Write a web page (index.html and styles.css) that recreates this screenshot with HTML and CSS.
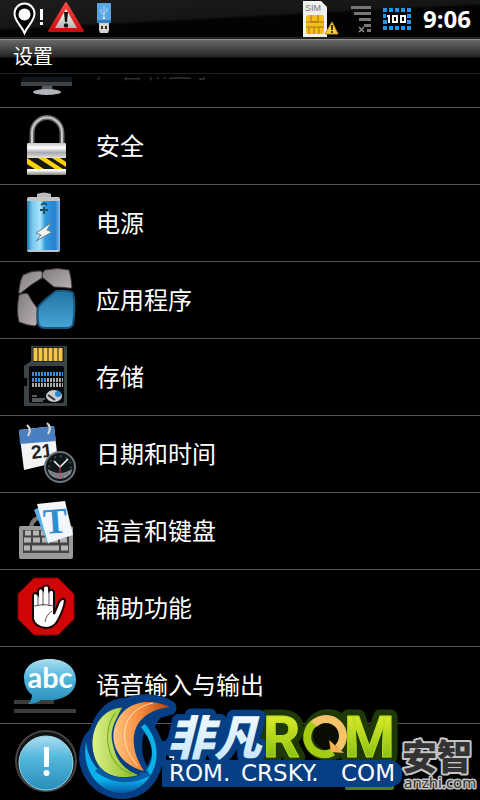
FILE: index.html
```html
<!DOCTYPE html>
<html lang="zh-CN">
<head>
<meta charset="utf-8">
<meta name="viewport" content="width=device-width, initial-scale=1">
<title>设置</title>
<link rel="stylesheet" href="styles.css">
</head>
<body>
<header class="status">
  <svg class="status-left" width="112" height="38" viewBox="0 0 112 38" aria-hidden="true">
    <defs>
      <linearGradient id="red" x2="0" y2="1"><stop stop-color="#ff4a40"/><stop offset="1" stop-color="#c80d0d"/></linearGradient>
      <linearGradient id="silver" x2="0" y2="1"><stop stop-color="#fff"/><stop offset="1" stop-color="#b5b5b5"/></linearGradient>
    </defs>
    <path d="M24.500 33C21 25 14.500 21 14.500 13.500A10 10 0 0 1 34.500 13.500C34.500 21 28 25 24.500 33Z" fill="#000" stroke="#fff" stroke-width="2"/>
    <circle cx="24.500" cy="14.500" r="6" fill="#fff"/>
    <path d="M40 9h3v11h-3zM40 22h3v3h-3z" fill="#fff"/>
    <path d="M66 3L83 31H49Z" fill="url(#red)" stroke="url(#red)" stroke-width="2" stroke-linejoin="round"/>
    <path d="M66 9L77 28H55Z" fill="url(#silver)"/>
    <path d="M64 12h4l-1 10h-2z" fill="#111"/><circle cx="66" cy="25.500" r="2.200" fill="#111"/>
    <rect x="97" y="3" width="14" height="20" rx="1" fill="#5aa5e0"/><rect x="97" y="20" width="14" height="3" fill="#2f7fc4"/>
    <path d="M104 6v12M101 9v3l3 3M107 8v3l-3 3" fill="none" stroke="#b9dcf7"/><circle cx="104" cy="18" r="1.500" fill="#b9dcf7"/>
    <path d="M99 23h10v7l-1 3h-8l-1-3z" fill="#d8d4cc"/><path d="M101 26h2v3h-2zM105 26h2v3h-2z" fill="#333"/>
  </svg>
  <svg class="status-right" width="112" height="38" viewBox="0 0 112 38" aria-hidden="true">
    <path d="M3 1h18l6 6v30H3z" fill="#f0f0f0"/>
    <text x="5" y="11" class="sim">SIM</text>
    <rect x="6" y="15" width="18" height="19" rx="2" fill="#f9bd17"/>
    <path d="M6 22h18M6 27h18M11 15v7h7v-7M9 34v-7M14 34v-7M19 34v-7" fill="none" stroke="#9b7a19"/>
    <path d="M32 22L38 34H25Z" fill="#ffd23a" stroke="#c89625"/><path d="M31 25h2v5h-2zM31 31h2v2h-2z" fill="#432f00"/>
    <path d="M51 6h20v3H51zM54 12h17v3H54zM59 18h12v3H59zM64 24h7v3h-7zM67 29h4v3h-4z" fill="#777"/>
    <path d="M59 27l5 5M64 27l-5 5" stroke="#888" stroke-width="1.500"/>
    <path d="M83 10h28M83 28h28" stroke="#2196ef" stroke-width="4" stroke-dasharray="4 2"/>
    <path d="M85 14v12M109 14v12" stroke="#2196ef" stroke-width="4" stroke-dasharray="4 2"/>
    <path d="M86 14h20v10h-17v-6h-3z" fill="#000"/>
    <path d="M87 16h2v7M93 16h4v6h-4zM101 16h4v6h-4z" fill="none" stroke="#fff" stroke-width="2"/>
  </svg>
  <time class="clock">9:06</time>
</header>
<h1 class="title">设置</h1>
<main class="viewport">
<ul class="list">
  <li><a class="row" href="#display">
    <svg class="icon" viewBox="0 0 64 64" aria-hidden="true"><path d="M7 6h51v42H7z" fill="#11161b"/><path d="M7 46h51v4H7z" fill="#3d4247"/><path d="M28 50h10l1 5h-12z" fill="#555b60"/><ellipse cx="33" cy="56" rx="14" ry="3" fill="#aeb4ba"/></svg>
    <span class="dim">声音和显示</span></a></li>
  <li><a class="row" href="#security">
    <svg class="icon" viewBox="0 0 64 64" aria-hidden="true">
      <defs><linearGradient id="metal" x2="0" y2="1"><stop stop-color="#c4c4c4"/><stop offset=".15" stop-color="#fff"/><stop offset=".3" stop-color="#a9a9a9"/><stop offset=".45" stop-color="#ddd"/><stop offset=".85" stop-color="#fff"/><stop offset="1" stop-color="#808080"/></linearGradient></defs>
      <path d="M18 33V20a14.500 15 0 0 1 30 0v13" fill="none" stroke="#666" stroke-width="5"/>
      <path d="M18 33V20a14.500 15 0 0 1 30 0v13" fill="none" stroke="#c8c8c8" stroke-width="2"/>
      <rect x="13" y="30" width="39" height="32" rx="1" fill="url(#metal)"/>
      <path d="M13 45h39v11H13z" fill="#171717"/><path d="M13 45l17 11h-9l-8-5zM24 45h8l17 11h-8zM38 45h8l6 4v5z" fill="#ffd10a"/>
    </svg><span>安全</span></a></li>
  <li><a class="row" href="#power">
    <svg class="icon" viewBox="0 0 64 64" aria-hidden="true">
      <defs><linearGradient id="cell"><stop stop-color="#1877ac"/><stop offset=".15" stop-color="#74c6ef"/><stop offset=".4" stop-color="#a9e3fb"/><stop offset=".55" stop-color="#319bdc"/><stop offset=".85" stop-color="#287fd0"/><stop offset="1" stop-color="#78bdf0"/></linearGradient></defs>
      <path d="M23 4q7-3 14 0v6H23z" fill="#bbb"/><rect x="13" y="7" width="33" height="55" rx="2" fill="#c2c5c8"/>
      <path d="M13 11h33v49H13z" fill="url(#cell)"/><path d="M27 15l3-2 3 2M30 17v7M26 20h8" fill="none" stroke="#244d66" stroke-width="2"/>
      <path d="M37 33L22 43l5 2-5 6 16-9-5-2z" fill="#f4f4f4" stroke="#617f91"/>
    </svg><span>电源</span></a></li>
  <li><a class="row" href="#apps">
    <svg class="icon" viewBox="0 0 64 64" aria-hidden="true">
      <defs><linearGradient id="stone" x2="1" y2="1"><stop stop-color="#817b7b"/><stop offset="1" stop-color="#b9b1b1"/></linearGradient><linearGradient id="tile" x2="0" y2="1"><stop stop-color="#2173a4"/><stop offset="1" stop-color="#47a5d5"/></linearGradient></defs>
      <g stroke="#3d3938"><path d="M9 8q10-5 18-4 2 1 1 7Q17 17 7 26q-3 2-2-3 1-10 4-15z" fill="url(#stone)"/><path d="M31 3q13-3 24 0 2 6 3 17-1 2-4 1-8-1-14-1L28 10q0-5 3-7z" fill="url(#stone)"/><path d="M5 28q7-3 9-1 3 6 9 14v15q0 3-3 3-8-1-15-4-3-11 0-27z" fill="url(#stone)"/></g>
      <path d="M24 41q1-3 8-9t10-8q14-1 17 2 3 12 0 31-1 4-7 4H31q-7 0-7-7-1-7 0-13z" fill="url(#tile)" stroke="#185581" stroke-width="2"/>
    </svg><span>应用程序</span></a></li>
  <li><a class="row" href="#storage">
    <svg class="icon" viewBox="0 0 64 64" aria-hidden="true">
      <path d="M17 2h36v60H10V42h3v-8h-3V22l7-5z" fill="#3b4345"/><path d="M19 3h31v15H19z" fill="#1c2021"/>
      <path d="M21.500 4v13M26.500 4v13M31.500 4v13M36.500 4v13M41.500 4v13M46.500 4v13" stroke="#f5c546" stroke-width="4"/>
      <rect x="15" y="22" width="35" height="37" rx="2" fill="#050708"/>
      <path d="M18 30h31" stroke="#398fe0" stroke-width="4" stroke-dasharray="2 1"/><path d="M18 36h16" stroke="#398fe0" stroke-width="4" stroke-dasharray="2 1"/><path d="M33 36h16M18 41h31" stroke="#aaa" stroke-width="4" stroke-dasharray="2 1"/>
      <ellipse cx="40" cy="52" rx="8" ry="6" fill="#c7cccf"/><circle cx="44" cy="50" r="3" fill="#2588c8"/><path d="M34 51l7 5" stroke="#333" stroke-width="2"/><path d="M18 52h5M18 55h13M18 57h11" stroke="#aaa"/>
    </svg><span>存储</span></a></li>
  <li><a class="row" href="#date">
    <svg class="icon" viewBox="0 0 64 64" aria-hidden="true">
      <path d="M5 9l35-4 4 36-34 8z" fill="#f4f4f4"/><path d="M5 9l35-4 2 15-36 3z" fill="#4a7fc2"/><path d="M13 4q5 4 1 11M33 2q5 4 1 11" fill="none" stroke="#ddd" stroke-width="2"/>
      <text x="18" y="38" class="day" transform="rotate(-7 18 37)">21</text>
      <circle cx="46" cy="46" r="15" fill="#10171b" stroke="#6f777b" stroke-width="2"/><path d="M34 48a12 10 0 0 0 24 0q-13 8-24 0z" fill="#777f85"/>
      <circle cx="46" cy="46" r="11" fill="none" stroke="#ccc" stroke-width="1" stroke-dasharray="1 4.760"/>
      <path d="M40 40l6 6 8-8" fill="none" stroke="#fff" stroke-width="1.500"/><path d="M46 45v13" stroke="#e4375b"/>
    </svg><span>日期和时间</span></a></li>
  <li><a class="row" href="#language">
    <svg class="icon" viewBox="0 0 64 64" aria-hidden="true">
      <path d="M17 30q0-10 14-12" fill="none" stroke="#777" stroke-width="4"/><rect x="5" y="28" width="54" height="33" rx="2" fill="#9a9a9a"/>
      <path d="M9 32h46v23H9z" fill="#444"/>
      <g stroke="#b5b5b5" stroke-width="5" fill="none"><path d="M11 35h42" stroke-dasharray="6 2"/><path d="M10 42h44" stroke-dasharray="7 2"/><path d="M10 50h6M18 50h27M47 50h7"/></g>
      <path d="M20 12l12-6 9 35-7 5z" fill="#55b2ec"/><path d="M23 6l28-3 8 34-25 8z" fill="#f3f6fa"/>
      <text x="30" y="36" class="letter" transform="rotate(-4 31 35)">T</text>
    </svg><span>语言和键盘</span></a></li>
  <li><a class="row" href="#accessibility">
    <svg class="icon" viewBox="0 0 64 64" aria-hidden="true">
      <path d="M20 3h24l16 16v25L44 60H20L4 44V19z" fill="#d00505" stroke="#850000"/>
      <path d="M19 44V20q2-4 5 0V16q2-5 5-1V12q3-3 6 0v4q3-3 5 1v22l5-12q4-5 6-2-1 9-7 20-4 8-12 8-11-1-13-9z" fill="#fff" stroke="#180000" stroke-width="2"/>
      <path d="M24 20v11M29 16v15M35 16v15M20 31q10-3 20 0M31 47q1-7 7-11" fill="none" stroke="#555"/>
    </svg><span>辅助功能</span></a></li>
  <li><a class="row" href="#voice">
    <svg class="icon" viewBox="0 0 64 64" aria-hidden="true">
      <defs><linearGradient id="bubble" x2="0" y2="1"><stop stop-color="#acdff0"/><stop offset=".4" stop-color="#54b7dc"/><stop offset="1" stop-color="#278dbb"/></linearGradient></defs>
      <path d="M0 48h40v4H0zM0 57h62v4H0z" fill="#3c3c3c"/><path d="M10 26C10 14 20 7 36 7s26 9 26 21-11 20-26 20h-9q-5 4-13 4 4-4 4-9-8-6-8-17z" fill="url(#bubble)"/>
      <text x="36" y="36" class="abc">abc</text>
    </svg><span>语音输入与输出</span></a></li>
  <li><a class="row" href="#about">
    <svg class="icon" viewBox="0 0 64 64" aria-hidden="true">
      <circle cx="32" cy="32" r="30" fill="#111" stroke="#444" stroke-width="2"/><circle cx="32" cy="34" r="27" fill="url(#bubble)" stroke="#98d8ef"/><rect x="30" y="18" width="5" height="20" rx="1" fill="#fff"/><circle cx="32.500" cy="44" r="3" fill="#fff"/>
    </svg><span>关于手机</span></a></li>
</ul>
</main>
<svg class="brand" width="404" height="108" viewBox="76 692 404 108" role="img" aria-label="非凡ROM ROM.CRSKY.COM 安智 anzhi.com">
  <defs>
    <linearGradient id="green" x2="0" y2="1"><stop stop-color="#f5f532"/><stop offset="1" stop-color="#6db50b"/></linearGradient>
    <linearGradient id="leaf"><stop stop-color="#dff28b"/><stop offset="1" stop-color="#83b819"/></linearGradient>
    <linearGradient id="orange"><stop stop-color="#ffc582"/><stop offset=".5" stop-color="#f4883a"/><stop offset="1" stop-color="#ab4012"/></linearGradient>
    <linearGradient id="ring" x2="0" y2="1"><stop stop-color="#0bb2ea"/><stop offset=".8" stop-color="#0bb2ea"/><stop offset="1" stop-color="#0759a8"/></linearGradient>
    <linearGradient id="ice" x2="0" y2="1"><stop stop-color="#fff"/><stop offset="1" stop-color="#bfe3fa"/></linearGradient>
  </defs>
  <rect x="345" y="780" width="49" height="10" rx="2" fill="#4f7f10"/>
  <g class="art-stroke">
    <g class="rom forest"><text x="263" y="757">R</text><text x="344" y="757">M</text></g>
    <circle cx="328" cy="735" r="26" fill="#1e3906"/>
    <text x="167" y="755" class="feifan navy">非凡</text>
  </g>
  <path d="M162 760H390q11 2 12 11v7q-2 8-12 9H162z" fill="#063f83"/>
  <circle cx="328" cy="735" r="15" fill="#090d04"/>
  <text x="167" y="755" class="feifan" fill="url(#ice)">非凡</text>
  <g class="rom rom-face" fill="url(#green)"><text x="263" y="757">R</text><text x="344" y="757">M</text></g>
  <path d="M316 722A16 16 0 0 0 333 752" fill="none" stroke="#a3cc12" stroke-width="8"/>
  <path d="M314 724A16 16 0 0 1 338 748" fill="none" stroke="#f4c36c" stroke-width="8"/><path d="M329 740l15 13-13-1z" fill="#f4b052"/>
  <g class="url"><text x="169" y="781">ROM.</text><text x="241" y="781">CRSKY.</text><text x="341" y="781">COM</text></g>
  <path d="M90 729C97 708 110 698 125 698C140 692 160 693 174 702Q179 708 174 714L160 718Q157 722 155 727Q166 743 163 760C159 784 144 799 122 799C98 799 80 779 79 758Q79 739 90 729Z" fill="#063f83"/>
  <path d="M144 733Q158 747 147 766Q139 751 144 733Z" fill="#05070a"/>
  <path d="M162 741v25" stroke="#063f83" stroke-width="8"/>
  <path d="M86 742C81 770 99 794 124 793C151 790 170 753 145 724L141 727C161 751 153 777 125 781C105 784 88 763 86 742Z" fill="url(#ring)"/>
  <path d="M97 769Q121 787 149 773" fill="none" stroke="#075da7" stroke-width="6"/>
  <path d="M123 707C102 708 91 727 92 746C94 773 115 783 140 775C110 766 107 733 123 707Z" fill="url(#leaf)" stroke="#063f83"/>
  <path d="M170 707C147 696 125 704 118 719C105 742 121 766 144 771C127 746 128 712 170 707Z" fill="url(#orange)" stroke="#063f83" stroke-width="3" paint-order="stroke"/>
  <path d="M115 713C101 733 107 767 132 774" fill="none" stroke="#6fa21a"/><path d="M153 703C121 709 116 743 138 766" fill="none" stroke="#ffe0ae"/>
  <text x="402" y="770" class="anzhi">安智</text><text x="404" y="788" class="anzhi-url">anzhi.com</text>
</svg>
</body>
</html>
```
FILE: styles.css
```css
* { box-sizing: border-box; }
body {
  position: relative;
  display: flex;
  flex-direction: column;
  height: 100vh;
  margin: 0;
  overflow: hidden;
  background: #000;
  color: #fff;
  font-family: "Noto Sans", "Noto Sans CJK SC", sans-serif;
}
.status {
  display: flex;
  flex: none;
  align-items: center;
  height: 39px;
  padding-right: 9px;
  background: linear-gradient(177deg, #1d1d1d, #151515 45%, #030303 50%);
  border-bottom: 2px solid #222;
}
.status-right { margin-left: auto; }
.clock {
  width: 59px;
  font: bold 24px/38px "Open Sans", sans-serif;
  text-align: right;
}
.sim { font: 9px "Liberation Sans", sans-serif; fill: #777; }
.title {
  flex: none;
  height: 35px;
  margin: 0;
  padding: 0 13px;
  border-top: 1px solid #909090;
  border-bottom: 1px solid #202020;
  background: linear-gradient(#6a6a6a, #222 17px, #000 18px);
  font-size: 20px;
  font-weight: 400;
  line-height: 34px;
}
.viewport {
  flex: 1;
  min-height: 0;
  margin-top: 3px;
  overflow: hidden;
}
.list {
  margin: -46px 0 0;
  padding: 0;
  list-style: none;
}
.row {
  display: flex;
  align-items: center;
  gap: 18px;
  height: 77px;
  padding: 0 14px 3px;
  border-bottom: 1px solid #555;
  color: #fff;
  font-size: 24px;
  text-decoration: none;
}
.icon { flex: none; width: 64px; height: 64px; }
.dim { color: #2a2a2a; }
.day { font: bold 19px "Liberation Sans", sans-serif; fill: #222; }
.letter { font: bold 36px "Liberation Serif", serif; fill: #2d8fd0; }
.abc { font: bold 29px "Lato", sans-serif; fill: #fff; text-anchor: middle; }
.brand {
  position: absolute;
  right: 0;
  bottom: 0;
}
.art-stroke text { stroke-width: 13px; stroke-linejoin: round; }
.feifan { font: italic 900 47px "Noto Sans CJK SC", sans-serif; }
.rom { font: bold 58px Roboto, sans-serif; }
.rom-face { stroke: #b7dc1c; stroke-width: 1px; stroke-linejoin: round; }
.navy { fill: #063f83; stroke: #063f83; }
.forest { fill: #1e3906; stroke: #1e3906; }
.url { font: 23px "DejaVu Sans", sans-serif; fill: #fff; }
.anzhi, .anzhi-url {
  fill: #333;
  stroke: #c4c4c4;
  stroke-width: 4px;
  stroke-linejoin: round;
  paint-order: stroke;
}
.anzhi { font: 900 35px "Noto Sans CJK SC", sans-serif; }
.anzhi-url { font: 15px "Noto Sans", sans-serif; stroke-width: 3px; }
```
